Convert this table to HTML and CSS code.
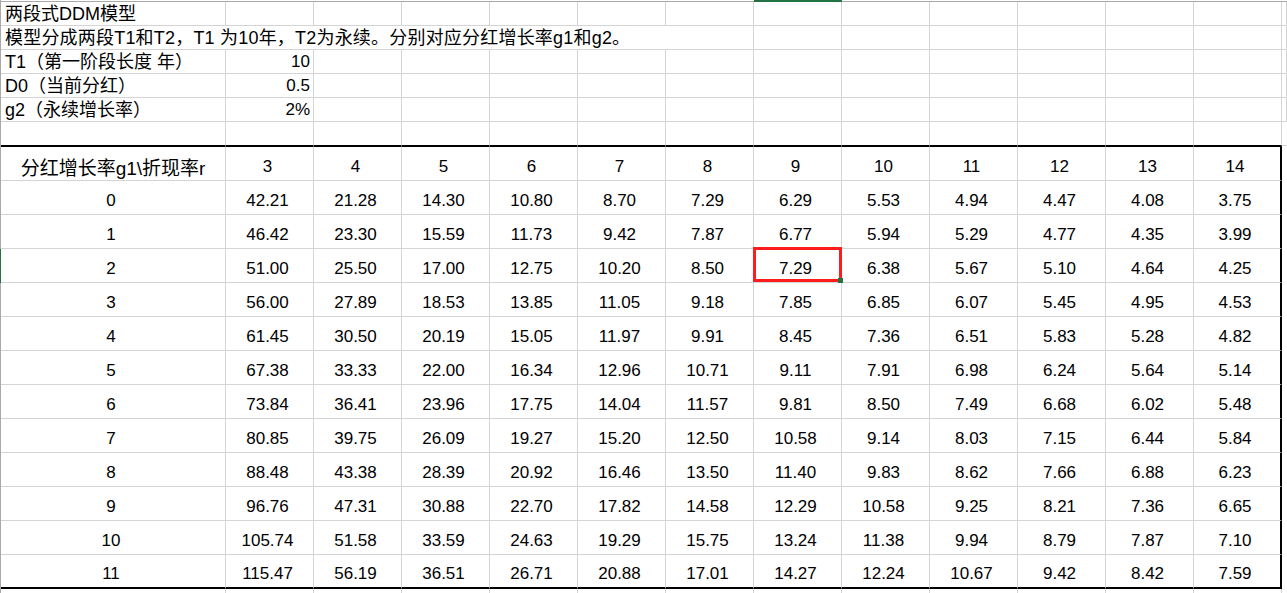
FILE: index.html
```html
<!DOCTYPE html>
<html lang="zh-CN">
<head>
<meta charset="utf-8">
<title>两段式DDM模型</title>
<link rel="stylesheet" href="styles.css">
</head>
<body>
<div class="sheet">
  <div class="row strip">
    <div class="edge"></div><div class="c"></div><div class="c"></div><div class="c"></div><div class="c"></div><div class="c"></div><div class="c"></div><div class="c"></div><div class="c sel-col"></div><div class="c"></div><div class="c"></div><div class="c"></div><div class="c"></div><div class="c"></div><div class="c"></div>
  </div>
  <div class="row text">
    <div class="edge"></div><div class="c label">两段式DDM模型</div><div class="c"></div><div class="c"></div><div class="c"></div><div class="c"></div><div class="c"></div><div class="c"></div><div class="c"></div><div class="c"></div><div class="c"></div><div class="c"></div><div class="c"></div><div class="c"></div><div class="c"></div>
  </div>
  <div class="row text">
    <div class="edge"></div><div class="c label span7">模型分成两段T1和T2，T1 为10年，T2为永续。分别对应分红增长率g1和g2。</div><div class="c"></div><div class="c"></div><div class="c"></div><div class="c"></div><div class="c"></div><div class="c"></div><div class="c"></div>
  </div>
  <div class="row text">
    <div class="edge"></div><div class="c label">T1（第一阶段长度 年）</div><div class="c value">10</div><div class="c"></div><div class="c"></div><div class="c"></div><div class="c"></div><div class="c"></div><div class="c"></div><div class="c"></div><div class="c"></div><div class="c"></div><div class="c"></div><div class="c"></div><div class="c"></div>
  </div>
  <div class="row text">
    <div class="edge"></div><div class="c label">D0（当前分红）</div><div class="c value">0.5</div><div class="c"></div><div class="c"></div><div class="c"></div><div class="c"></div><div class="c"></div><div class="c"></div><div class="c"></div><div class="c"></div><div class="c"></div><div class="c"></div><div class="c"></div><div class="c"></div>
  </div>
  <div class="row text">
    <div class="edge"></div><div class="c label">g2（永续增长率）</div><div class="c value">2%</div><div class="c"></div><div class="c"></div><div class="c"></div><div class="c"></div><div class="c"></div><div class="c"></div><div class="c"></div><div class="c"></div><div class="c"></div><div class="c"></div><div class="c"></div><div class="c"></div>
  </div>
  <div class="row text before-table">
    <div class="edge"></div><div class="c"></div><div class="c"></div><div class="c"></div><div class="c"></div><div class="c"></div><div class="c"></div><div class="c"></div><div class="c"></div><div class="c"></div><div class="c"></div><div class="c"></div><div class="c"></div><div class="c"></div><div class="c spill"></div>
  </div>

  <div class="row thead">
    <div class="edge"></div><div class="c head-label">分红增长率g1\折现率r</div><div class="c n">3</div><div class="c n">4</div><div class="c n">5</div><div class="c n">6</div><div class="c n">7</div><div class="c n">8</div><div class="c n">9</div><div class="c n">10</div><div class="c n">11</div><div class="c n">12</div><div class="c n">13</div><div class="c n last">14</div><div class="c spill"></div>
  </div>
  <div class="row data">
    <div class="edge"></div><div class="c n">0</div><div class="c n">42.21</div><div class="c n">21.28</div><div class="c n">14.30</div><div class="c n">10.80</div><div class="c n">8.70</div><div class="c n">7.29</div><div class="c n">6.29</div><div class="c n">5.53</div><div class="c n">4.94</div><div class="c n">4.47</div><div class="c n">4.08</div><div class="c n last">3.75</div><div class="c spill"></div>
  </div>
  <div class="row data">
    <div class="edge"></div><div class="c n">1</div><div class="c n">46.42</div><div class="c n">23.30</div><div class="c n">15.59</div><div class="c n">11.73</div><div class="c n">9.42</div><div class="c n">7.87</div><div class="c n">6.77</div><div class="c n">5.94</div><div class="c n">5.29</div><div class="c n">4.77</div><div class="c n">4.35</div><div class="c n last">3.99</div><div class="c spill"></div>
  </div>
  <div class="row data">
    <div class="edge active"></div><div class="c n">2</div><div class="c n">51.00</div><div class="c n">25.50</div><div class="c n">17.00</div><div class="c n">12.75</div><div class="c n">10.20</div><div class="c n">8.50</div><div class="c n selected">7.29</div><div class="c n">6.38</div><div class="c n">5.67</div><div class="c n">5.10</div><div class="c n">4.64</div><div class="c n last">4.25</div><div class="c spill"></div>
  </div>
  <div class="row data">
    <div class="edge"></div><div class="c n">3</div><div class="c n">56.00</div><div class="c n">27.89</div><div class="c n">18.53</div><div class="c n">13.85</div><div class="c n">11.05</div><div class="c n">9.18</div><div class="c n">7.85</div><div class="c n">6.85</div><div class="c n">6.07</div><div class="c n">5.45</div><div class="c n">4.95</div><div class="c n last">4.53</div><div class="c spill"></div>
  </div>
  <div class="row data">
    <div class="edge"></div><div class="c n">4</div><div class="c n">61.45</div><div class="c n">30.50</div><div class="c n">20.19</div><div class="c n">15.05</div><div class="c n">11.97</div><div class="c n">9.91</div><div class="c n">8.45</div><div class="c n">7.36</div><div class="c n">6.51</div><div class="c n">5.83</div><div class="c n">5.28</div><div class="c n last">4.82</div><div class="c spill"></div>
  </div>
  <div class="row data">
    <div class="edge"></div><div class="c n">5</div><div class="c n">67.38</div><div class="c n">33.33</div><div class="c n">22.00</div><div class="c n">16.34</div><div class="c n">12.96</div><div class="c n">10.71</div><div class="c n">9.11</div><div class="c n">7.91</div><div class="c n">6.98</div><div class="c n">6.24</div><div class="c n">5.64</div><div class="c n last">5.14</div><div class="c spill"></div>
  </div>
  <div class="row data">
    <div class="edge"></div><div class="c n">6</div><div class="c n">73.84</div><div class="c n">36.41</div><div class="c n">23.96</div><div class="c n">17.75</div><div class="c n">14.04</div><div class="c n">11.57</div><div class="c n">9.81</div><div class="c n">8.50</div><div class="c n">7.49</div><div class="c n">6.68</div><div class="c n">6.02</div><div class="c n last">5.48</div><div class="c spill"></div>
  </div>
  <div class="row data">
    <div class="edge"></div><div class="c n">7</div><div class="c n">80.85</div><div class="c n">39.75</div><div class="c n">26.09</div><div class="c n">19.27</div><div class="c n">15.20</div><div class="c n">12.50</div><div class="c n">10.58</div><div class="c n">9.14</div><div class="c n">8.03</div><div class="c n">7.15</div><div class="c n">6.44</div><div class="c n last">5.84</div><div class="c spill"></div>
  </div>
  <div class="row data">
    <div class="edge"></div><div class="c n">8</div><div class="c n">88.48</div><div class="c n">43.38</div><div class="c n">28.39</div><div class="c n">20.92</div><div class="c n">16.46</div><div class="c n">13.50</div><div class="c n">11.40</div><div class="c n">9.83</div><div class="c n">8.62</div><div class="c n">7.66</div><div class="c n">6.88</div><div class="c n last">6.23</div><div class="c spill"></div>
  </div>
  <div class="row data">
    <div class="edge"></div><div class="c n">9</div><div class="c n">96.76</div><div class="c n">47.31</div><div class="c n">30.88</div><div class="c n">22.70</div><div class="c n">17.82</div><div class="c n">14.58</div><div class="c n">12.29</div><div class="c n">10.58</div><div class="c n">9.25</div><div class="c n">8.21</div><div class="c n">7.36</div><div class="c n last">6.65</div><div class="c spill"></div>
  </div>
  <div class="row data">
    <div class="edge"></div><div class="c n">10</div><div class="c n">105.74</div><div class="c n">51.58</div><div class="c n">33.59</div><div class="c n">24.63</div><div class="c n">19.29</div><div class="c n">15.75</div><div class="c n">13.24</div><div class="c n">11.38</div><div class="c n">9.94</div><div class="c n">8.79</div><div class="c n">7.87</div><div class="c n last">7.10</div><div class="c spill"></div>
  </div>
  <div class="row data final">
    <div class="edge"></div><div class="c n">11</div><div class="c n">115.47</div><div class="c n">56.19</div><div class="c n">36.51</div><div class="c n">26.71</div><div class="c n">20.88</div><div class="c n">17.01</div><div class="c n">14.27</div><div class="c n">12.24</div><div class="c n">10.67</div><div class="c n">9.42</div><div class="c n">8.42</div><div class="c n last">7.59</div><div class="c spill"></div>
  </div>
  <div class="row tail">
    <div class="edge"></div><div class="c"></div><div class="c"></div><div class="c"></div><div class="c"></div><div class="c"></div><div class="c"></div><div class="c"></div><div class="c"></div><div class="c"></div><div class="c"></div><div class="c"></div><div class="c"></div><div class="c"></div><div class="c spill"></div>
  </div>
</div>
</body>
</html>
```

FILE: styles.css
```css
* { box-sizing: border-box; margin: 0; padding: 0; }

html, body {
  width: 1287px;
  height: 593px;
  overflow: hidden;
  background: #ffffff;
}

body {
  font-family: "Liberation Sans", "Noto Sans CJK SC", sans-serif;
  color: #000000;
}

.sheet {
  display: flex;
  flex-direction: column;
}

.row {
  display: grid;
  grid-template-columns: 1px 225px repeat(12, 88px) 1fr;
}

.edge {
  background: #a9a9a9;
}

.edge.active {
  background: #217346;
}

.c {
  border-right: 1px solid #d4d4d4;
  border-bottom: 1px solid #d4d4d4;
  min-width: 0;
}

/* strip of the column header visible at the very top */
.strip {
  height: 2px;
}
.strip .c {
  border-right: 0;
  border-bottom: 1px solid #a9a9a9;
}
.strip .sel-col {
  background: #217346;
  border-bottom-color: #217346;
}

/* upper text rows */
.text {
  height: 24px;
}
.text .c {
  display: flex;
  align-items: flex-end;
  font-size: 18px;
  line-height: 22px;
  white-space: nowrap;
}
.text .label {
  padding-left: 4px;
  overflow: visible;
}
.text .span7 {
  grid-column: 2 / 9;
  background: #ffffff;
  letter-spacing: 0.2px;
}
.text .value {
  justify-content: flex-end;
  padding-right: 3px;
  font-size: 17px;
}

.before-table .c {
  border-bottom-color: #000000;
}
.before-table .spill {
  border-bottom-color: #d4d4d4;
}

/* table */
.thead {
  height: 35px;
}
.thead .c {
  border-top: 1px solid #000000;
}
.thead .spill {
  border-top: 0;
}

.data {
  height: 34px;
}

.n,
.head-label {
  display: flex;
  align-items: center;
  justify-content: center;
  padding-top: 6px;
  padding-right: 4px;
  font-size: 17px;
  white-space: nowrap;
}

.head-label {
  font-size: 19px;
  padding-right: 0;
}

.c.last {
  border-right: 2px solid #000000;
}

.final .c {
  border-bottom: 2px solid #000000;
}
.final .spill {
  border-bottom: 0;
}

.spill {
  border-right: 0;
}
.data .spill,
.thead .spill {
  border-bottom: 0;
}

.tail {
  height: 4px;
}
.tail .c {
  border-bottom: 0;
}

/* selected cell */
.selected {
  position: relative;
}
.selected::after {
  content: "";
  position: absolute;
  top: -2px;
  left: -1px;
  right: -1px;
  bottom: 0;
  border: 3px solid #ff1c1c;
}
.selected::before {
  content: "";
  position: absolute;
  right: -2px;
  bottom: -1px;
  width: 5px;
  height: 5px;
  background: #217346;
  z-index: 1;
}
```
